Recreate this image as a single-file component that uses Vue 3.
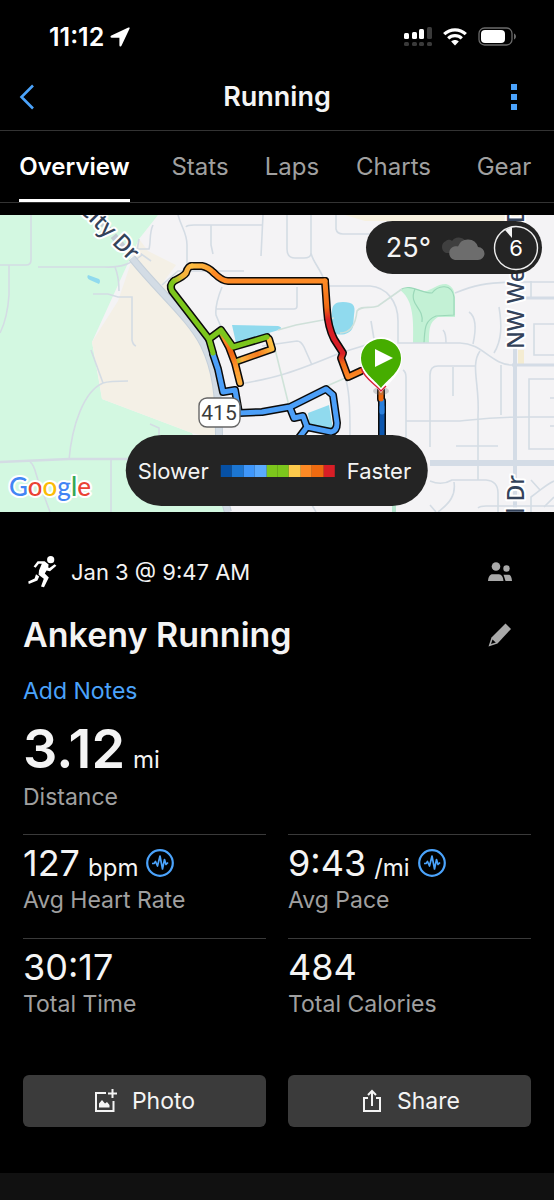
<template>
  <div class="page">
    <div class="status-bar">
      <div class="status-time">
        <span>11:12</span>
        <svg class="location-icon" viewBox="0 0 20 20">
          <path d="M18.4 0.6 C19.4 0.2 20 0.8 19.5 1.8 L11.6 18.6 C11 19.9 9.4 19.6 9.4 18.2 V10.7 H1.8 C0.3 10.7 0 9 1.4 8.4 Z" fill="#fff" />
        </svg>
      </div>
      <div class="status-icons">
        <svg width="28" height="20" viewBox="0 0 28 20">
          <g fill="#fff">
            <rect x="0" y="6" width="5" height="6" rx="1.5" />
            <rect x="8" y="5" width="5" height="7" rx="1.5" />
            <rect x="15" y="2" width="5" height="10" rx="1.5" />
          </g>
          <g fill="#3a3a3a">
            <rect x="23" y="0" width="5" height="12" rx="1.5" />
            <rect v-for="x in [0, 8, 15, 23]" :key="x" :x="x" y="15" width="5" height="4" rx="1.5" />
          </g>
        </svg>
        <svg width="24" height="18" viewBox="0 0 24 18">
          <g fill="none" stroke="#fff" stroke-width="3.2">
            <path d="M1.2 6.2 C7.3 0.3 16.7 0.3 22.8 6.2" />
            <path d="M5.2 10.4 C9 6.8 15 6.8 18.8 10.4" />
          </g>
          <path d="M8.2 13.6 C10.4 11.6 13.6 11.6 15.8 13.6 L12 17.6 Z" fill="#fff" />
        </svg>
        <svg width="39" height="20" viewBox="0 0 39 20">
          <rect x="1" y="1" width="33" height="17" rx="5.5" fill="none" stroke="#6b6b6b" stroke-width="1.3" />
          <rect x="3" y="3" width="24" height="13" rx="4" fill="#fff" />
          <path d="M36 6.5 C38.6 7.6 38.6 11.4 36 12.5 Z" fill="#6b6b6b" />
        </svg>
      </div>
    </div>

    <header class="nav-bar">
      <button class="icon-btn" aria-label="Back">
        <svg width="16" height="26" viewBox="0 0 16 26">
          <path d="M14 1.5 L2.5 13 L14 24.5" fill="none" stroke="#4ba3fb" stroke-width="2.6" />
        </svg>
      </button>
      <h1>Running</h1>
      <button class="icon-btn more" aria-label="More">
        <svg width="6" height="26" viewBox="0 0 6 26" fill="#4ba3fb">
          <rect width="6" height="6" />
          <rect y="10" width="6" height="6" />
          <rect y="20" width="6" height="6" />
        </svg>
      </button>
    </header>

    <nav class="tabs">
      <button
        v-for="tab in tabs"
        :key="tab"
        class="tab"
        :class="{ active: tab === activeTab }"
        @click="activeTab = tab"
      >
        {{ tab }}
      </button>
    </nav>

    <section class="map">
      <svg class="map-canvas" viewBox="0 0 554 297">
        <defs>
          <linearGradient id="slowTurn" gradientUnits="userSpaceOnUse" x1="172" y1="66" x2="190" y2="52">
            <stop offset="0" stop-color="#7cc61c" />
            <stop offset="0.5" stop-color="#f5b53a" />
            <stop offset="1" stop-color="#fbb040" />
          </linearGradient>
          <linearGradient id="topTurn" gradientUnits="userSpaceOnUse" x1="190" y1="52" x2="222" y2="62">
            <stop offset="0" stop-color="#fcbf42" />
            <stop offset="1" stop-color="#fd8a25" />
          </linearGradient>
          <linearGradient id="sprint" gradientUnits="userSpaceOnUse" x1="325" y1="66" x2="345" y2="165">
            <stop offset="0" stop-color="#fd8a25" />
            <stop offset="0.26" stop-color="#f06a14" />
            <stop offset="0.38" stop-color="#d81e26" />
            <stop offset="0.74" stop-color="#d81e26" />
            <stop offset="0.84" stop-color="#f06a14" />
            <stop offset="1" stop-color="#fd8a25" />
          </linearGradient>
          <linearGradient id="spur" gradientUnits="userSpaceOnUse" x1="221" y1="117" x2="240" y2="170">
            <stop offset="0" stop-color="#7cc61c" />
            <stop offset="0.15" stop-color="#fd8a25" />
            <stop offset="0.4" stop-color="#ee6310" />
            <stop offset="0.7" stop-color="#fd9a2c" />
            <stop offset="1" stop-color="#fbb040" />
          </linearGradient>
          <linearGradient id="spurBack" gradientUnits="userSpaceOnUse" x1="234" y1="147" x2="273" y2="133">
            <stop offset="0" stop-color="#7cc61c" />
            <stop offset="0.2" stop-color="#fbb040" />
            <stop offset="0.6" stop-color="#f77b1e" />
            <stop offset="1" stop-color="#fcbf42" />
          </linearGradient>
        </defs>

        <!-- land -->
        <rect width="554" height="297" fill="#f4f3f5" />
        <path d="M158 0 L139 24 L92 127 L102 184 L192 218 L226 297 H0 V0 Z" fill="#d3f8e1" />
        <path d="M139 24 L148 36 L176 50 L164 66 C186 92 207 122 214 160 L217 224 L192 218 L102 184 L99 165 L92 127 L118 86 Z" fill="#f4f0e6" />
        <path d="M345 0 H520 V6 H365 Z" fill="#f6f0df" />
        <path d="M518 135 H524 V150 H518 Z" fill="#f4ecd2" />

        <!-- park -->
        <path d="M400 75 C408 70 414 74 420 75 C430 79 434 69 446 69 C454 71 455 78 455 86 V102 H438 C430 107 429 112 429 128 H413 C414 100 412 84 400 75 Z" fill="#c3f1d5" />
        <g fill="none" stroke="#9bd8b9" stroke-width="1.2">
          <path d="M400 75 C410 68 420 78 432 78 C438 70 452 68 454 82 L454 100 L436 101 C424 106 425 114 424 128" />
          <path d="M415 74 C408 90 424 92 422 107" />
        </g>

        <!-- water -->
        <g fill="#90daee">
          <path d="M88 60 L99 64 Q101 66 99 69 L90 65 Q86 63 88 60 Z" />
          <path d="M232 110 L278 111 C285 113 279 115 272 117 L236 128 Z" />
          <path d="M332 97 C332 90 335 87 343 87 C353 87 356 90 354 100 L353 112 C350 121 337 121 333 117 C330 112 331 104 332 97 Z" />
          <path d="M308 198 L329 190 L333 214 L310 213 Z" />
        </g>

        <!-- streets -->
        <g fill="none" stroke="#d4dce4" stroke-width="1.6">
          <path d="M31 0 V45 Q31 50 26 50 H0" />
          <path d="M9 50 V80 C8 95 4 110 0 118" />
          <path d="M38 52 H104 C122 53 132 48 142 40 M115 52 Q119 62 119 76" />
          <path d="M93 79 H108 L118 82 H132 V125 Q133 130 136 131" />
          <path d="M91 135 L103 168 Q109 166 128 166 M103 168 C84 176 72 210 69 245" />
          <path d="M150 209 L159 213 V228" />
          <path d="M153 10 C149 18 151 27 149 34 L136 34 M139 24 L137 36 L151 46" />
          <path d="M178 0 C182 14 187 18 187 30 V56" />
          <path d="M186 12 Q187 10 194 10 H263 M211 10 V30 L213 39 M263 0 L261 41" />
          <path d="M162 70 L178 56 H244" />
          <path d="M222 72 C218 82 215 92 216 100 L221 112 M216 94 H294 Q297 94 297 91 V72" />
          <path d="M287 0 V34 Q287 43 295 43 H304 Q311 43 311 38 V0 M311 38 C313 48 322 55 325 68" />
          <path d="M326 71 H370 C386 72 398 86 398 106 V128 H460 C482 128 492 150 512 150" />
          <path d="M336 0 V14 Q337 19 343 19 H370" />
          <path d="M240 169 C275 163 292 158 340 138 L366 130" />
          <path d="M262 131 L297 126 Q301 126 304 132 L312 150" />
          <path d="M340 118 C352 118 356 106 357 96 C361 90 370 94 378 91 L402 74" stroke="#cfe0d9" />
          <path d="M278 115 L296 110 L334 103" stroke="#cfe0d9" />
          <path d="M275 134 L290 195 M320 174 L352 160" stroke="#cfe3d9" />
          <path d="M371 106 L374 124" />
          <path d="M455 78 C475 70 485 68 512 67 H554" />
          <path d="M469 97 C478 103 475 120 473 129 M443 115 Q446 118 446 128" />
          <path d="M499 92 C502 110 502 125 494 138 M480 136 C470 150 480 170 478 200 V265" />
          <path d="M430 232 V160 Q430 151 438 151 H476 M453 152 V181" />
          <path d="M403 155 Q406 157 406 162 V228 M406 206 H460 C480 204 490 202 528 202 H554 M501 150 V200" />
          <path d="M456 231 H498" />
          <path d="M554 109 H534 V140 H554 M554 164 H529 V234 H554 M531 66 V84 M554 183 H550 M554 211 H550" />
          <path d="M346 165 C350 180 350 200 350 222" />
          <path d="M430 266 Q442 271 452 265 H486 Q498 266 498 278 V297 M454 267 C456 280 450 288 438 297 M430 290 L436 297" />
          <path d="M554 266 C545 270 540 276 531 282 V297 M531 265 L540 275 M478 293 Q480 291 486 291 H554" />
          <path d="M0 247 L69 244 H130" stroke-width="2.4" />
          <path d="M30 247 C36 250 36 265 42 275 L50 297 M111 245 V297" />
          <path d="M312 290 L316 297 M544 292 L554 282" />
        </g>
        <g fill="none" stroke="#d4dce6">
          <path d="M430 248 H554" stroke-width="6" />
          <path d="M515 130 V297" stroke-width="4" />
          <path d="M525 83 H554 M512 150 H554" stroke-width="3" />
        </g>

        <!-- highway -->
        <path d="M132 43 C158 76 190 102 204 130 C216 155 219 180 219 220 C219 250 221 275 228 297" fill="none" stroke="#c5d0da" stroke-width="8" />
        <path d="M132 43 C158 76 190 102 204 130 C216 155 219 180 219 220 C219 250 221 275 228 297" fill="none" stroke="#d3dce5" stroke-width="6" />
        <path d="M88 -10 L126 36" stroke="#c4ccd4" stroke-width="7" stroke-dasharray="6 4" />
        <path d="M394 290 V297" stroke="#b8e6cf" stroke-width="4" />

        <!-- street names -->
        <g class="street-name">
          <text transform="translate(130 47) rotate(45)" text-anchor="end">City Dr</text>
          <text transform="translate(524 134) rotate(-90)">NW Weigel Dr</text>
          <text transform="translate(524 260) rotate(-90)" text-anchor="end">NW Weigel Dr</text>
        </g>

        <!-- route -->
        <g fill="none" stroke-linejoin="round">
          <g stroke="#0b0b0b" stroke-width="8" stroke-linecap="round">
            <path v-for="leg in route" :key="leg.d" :d="leg.d" />
          </g>
          <g stroke-width="5" stroke-linecap="round">
            <path v-for="leg in route" :key="leg.d" :d="leg.d" :stroke="leg.color" />
          </g>
        </g>

        <!-- route shield -->
        <rect x="199" y="183" width="41" height="29" rx="8" fill="#fff" stroke="#666" stroke-width="1.4" />
        <text class="shield" x="219" y="205" text-anchor="middle">415</text>

        <!-- start pin -->
        <ellipse cx="381" cy="176" rx="8" ry="4" fill="#777" opacity="0.3" />
        <path d="M381 178 C374 168 360 160 360 143 A21 21 0 0 1 402 143 C402 160 388 168 381 178 Z" fill="#fff" />
        <path d="M361 153 C364 163 375 169 381 176 L386 171" fill="none" stroke="#d8203a" stroke-width="1.4" />
        <path d="M381 173 C374 164 361 157 361 143 A20 19 0 0 1 401 143 C401 157 388 164 381 173 Z" fill="#46ad00" />
        <path d="M375 134 L393 143 L375 152 Z" fill="#fff" />

        <text class="google" x="9" y="281">
          <tspan v-for="(l, i) in googleLetters" :key="i" :fill="l.color">{{ l.char }}</tspan>
        </text>
      </svg>

      <div class="weather">
        <span class="temp">25°</span>
        <svg width="46" height="26" viewBox="0 0 46 26">
          <path d="M7 18 A6.5 6.5 0 0 1 7 6 C9 4 12 5 13 6 A8.5 8.5 0 0 1 26 5 L18 18 Z" fill="#3f3f3f" />
          <path d="M16 25 A7 7 0 0 1 15 11.5 C17 11 18 11 19 11.5 A10.5 10.5 0 0 1 39 12 A6.5 6.5 0 0 1 39 25 Z" fill="#6d6d6d" />
        </svg>
        <svg class="wind" width="46" height="46" viewBox="0 0 46 46">
          <circle cx="23" cy="23" r="21.5" fill="none" stroke="#eee" stroke-width="1.4" />
          <path d="M12 5 L19 2 V13 Z" fill="#f4f4f4" />
          <text x="23" y="31" text-anchor="middle" fill="#fff">6</text>
        </svg>
      </div>

      <div class="legend">
        <span>Slower</span>
        <div class="legend-bar">
          <i v-for="(c, i) in paceColors" :key="i" :style="{ background: c }"></i>
        </div>
        <span>Faster</span>
      </div>
    </section>

    <main class="details">
      <div class="row date-row">
        <svg width="30" height="32" viewBox="0 0 30 32">
          <circle cx="22.7" cy="3.7" r="3.6" fill="#fff" />
          <path
            d="M9.6 5.2 H16.6 L20.6 8.6 L20.2 11.4 L21.4 12 L26.6 8.2 L28.4 9.8 L22 15.2 L18.6 14.6 L16.8 17.4 L20.8 21.4 L16 31.2 L13 30.6 L15.8 22.8 L10.6 18.8 L11 14.4 L13.8 7.8 H10.8 L7.6 11.8 L5.6 10.4 Z"
            fill="#fff"
          />
          <path d="M8 18.2 L11.2 20.6 L9.4 24.4 L0.8 28 L0.2 25.6 L6.6 22.4 Z" fill="#fff" />
        </svg>
        <span class="date">Jan 3 @ 9:47 AM</span>
        <button class="icon-btn" aria-label="Privacy">
          <svg width="24" height="20" viewBox="0 0 24 20" fill="#a9a9a9">
            <circle cx="8" cy="4.5" r="4.3" />
            <circle cx="18.5" cy="6.5" r="3.2" />
            <path d="M0 19 C0.3 14.5 2 12.2 4.500 12.2 H11 C13.5 12.2 15 14.5 15.5 19 Z" />
            <path d="M15.5 12.8 H20.5 C22.7 12.8 23.7 15.5 24 19 H17.5 Z" />
          </svg>
        </button>
      </div>

      <div class="row title-row">
        <h2>Ankeny Running</h2>
        <button class="icon-btn" aria-label="Edit">
          <svg width="24" height="24" viewBox="0 0 24 24">
            <path d="M17.5 0.5 L23 6 L9.5 20.5 L0.5 23.5 L3.5 14.5 Z" fill="#a9a9a9" />
            <path d="M4.5 16.4 L7.8 19.500 L3 21 Z" fill="#000" />
          </svg>
        </button>
      </div>

      <a class="notes" href="#">Add Notes</a>

      <div class="distance">
        <div class="value"><strong>3.12</strong><span class="unit">mi</span></div>
        <div class="label">Distance</div>
      </div>

      <div class="stats">
        <div v-for="stat in stats" :key="stat.label" class="stat">
          <div class="value">
            <span>{{ stat.value }}</span>
            <span v-if="stat.unit" class="unit">{{ stat.unit }}</span>
            <svg v-if="stat.unit" class="pulse" width="28" height="28" viewBox="0 0 28 28">
              <g fill="none" stroke="#4ba3fb">
                <circle cx="14" cy="14" r="12.8" stroke-width="2.2" />
                <path d="M6 14.5 H8 L9.5 12.5 L11.5 17 L14 7 L16.5 20 L18.5 10.5 L20 15.5 L22 13.5" stroke-width="1.7" stroke-linejoin="round" />
              </g>
            </svg>
          </div>
          <div class="label">{{ stat.label }}</div>
        </div>
      </div>

      <div class="actions">
        <button class="action">
          <svg width="24" height="24" viewBox="0 0 24 24">
            <path d="M12 4 H2 V22 H19.5 V12" fill="none" stroke="#f4f4f4" stroke-width="2" />
            <path d="M18.5 0 V9 M14 4.5 H23" stroke="#f4f4f4" stroke-width="2" />
            <path d="M5 18.5 V14.5 L8 11 L11 14.5 L13 13 L15.5 16 V18.5 Z" fill="#f4f4f4" />
          </svg>
          <span>Photo</span>
        </button>
        <button class="action">
          <svg width="24" height="24" viewBox="0 0 24 24" fill="none" stroke="#f4f4f4" stroke-width="2">
            <path d="M9 9 H5 V22 H21 V9 H17" />
            <path d="M13 17 V2 M9 6 L13 2 L17 6" />
          </svg>
          <span>Share</span>
        </button>
      </div>
    </main>

    <div class="next-section"></div>
  </div>
</template>

<script setup>
import { ref } from "vue";

const tabs = ["Overview", "Stats", "Laps", "Charts", "Gear"];
const activeTab = ref("Overview");

const stats = [
  { value: "127", unit: "bpm", label: "Avg Heart Rate" },
  { value: "9:43", unit: "/mi", label: "Avg Pace" },
  { value: "30:17", label: "Total Time" },
  { value: "484", label: "Total Calories" },
];

// slow -> fast
const paceColors = [
  "#0650a4",
  "#1c76d2",
  "#3f97fb",
  "#5aaafe",
  "#7cc61c",
  "#7cc61c",
  "#fdca4c",
  "#fd8a25",
  "#ee6a10",
  "#d81e26",
];

const googleLetters = [
  { char: "G", color: "#4285f4" },
  { char: "o", color: "#ea4335" },
  { char: "o", color: "#fbbc05" },
  { char: "g", color: "#4285f4" },
  { char: "l", color: "#34a853" },
  { char: "e", color: "#ea4335" },
];

// route legs, drawn in order
const route = [
  { color: "#0c56ae", d: "M382 192 V230" },
  { color: "#2b80dc", d: "M382 186 V197" },
  { color: "#ee6a10", d: "M381 176 V184" },
  { color: "#4c9ff8", d: "M213 139 L218 154 L223 177 L235 175 L239 198 L262 197 L290 192 L326 174 L333 180 L337 208 Q337 216 331 217 L307 212 L298 224" },
  { color: "#4c9ff8", d: "M290 193 L294 203 L303 201 L307 212" },
  { color: "url(#spurBack)", d: "M235 147 L272 134 L269 124" },
  { color: "url(#spur)", d: "M221 117 L229 132 L235 148 L240 168" },
  { color: "#7cc61c", d: "M213 138 L209 124 L221 115 L233 132 L267 122" },
  { color: "#7cc61c", d: "M209 124 L172 76 Q169 70 174 66" },
  { color: "url(#slowTurn)", d: "M174 66 Q184 61 186 58 Q188 51 192 51" },
  { color: "url(#topTurn)", d: "M192 51 H202 Q208 52 214 58" },
  { color: "#fd8a25", d: "M214 58 Q222 66 228 66 L325 66" },
  { color: "url(#sprint)", d: "M325 66 L327 95 Q328 112 334 124 L343 138 L341 143 L348 162 L361 156" },
];
</script>

<style>
body {
  margin: 0;
  background: #000;
}
</style>

<style scoped>
.page {
  display: flex;
  flex-direction: column;
  min-height: 100vh;
  background: #000;
  color: #f4f4f4;
  font-family: Inter, "Liberation Sans", sans-serif;
  font-size: 23px;
  line-height: 32px;
}

button {
  padding: 0;
  border: none;
  background: none;
  color: inherit;
  font: inherit;
  cursor: pointer;
}

svg {
  display: block;
  flex: none;
}

/* status bar */
.status-bar {
  display: flex;
  justify-content: space-between;
  align-items: center;
  height: 64px;
  padding: 10px 37px 0 49px;
  box-sizing: border-box;
}

.status-time {
  display: flex;
  align-items: center;
  gap: 6px;
  color: #fff;
  font-size: 25px;
  font-weight: 600;
}

.location-icon {
  width: 20px;
  height: 20px;
}

.status-icons {
  display: flex;
  align-items: center;
  gap: 11px;
}

/* nav bar */
.nav-bar {
  display: grid;
  grid-template-columns: 1fr auto 1fr;
  align-items: center;
  height: 66px;
  padding: 0 19px;
  border-bottom: 1px solid #333;
}

.nav-bar h1 {
  margin: 0;
  font-size: 27px;
  font-weight: 600;
}

.icon-btn {
  display: flex;
}

.more {
  justify-self: end;
  margin-right: 18px;
}

/* tabs */
.tabs {
  display: grid;
  grid-template-columns: 149fr 102fr 82fr 121fr 100fr;
  justify-items: center;
  height: 71px;
  border-bottom: 1px solid #333;
}

.tab {
  border-top: 3px solid transparent;
  border-bottom: 3px solid transparent;
  color: #a0a0a0;
  font-size: 24px;
}

.tab.active {
  border-bottom-color: #fff;
  color: #fff;
  font-weight: 600;
}

/* map */
.map {
  position: relative;
  margin-top: 12px;
}

.map-canvas {
  width: 100%;
  height: auto;
  overflow: hidden;
}

.street-name {
  font-family: "Noto Sans", sans-serif;
  font-size: 23px;
  font-weight: 500;
  fill: #33425a;
  stroke: #fff;
  stroke-width: 4px;
  stroke-linejoin: round;
  paint-order: stroke;
}

.shield {
  font-family: Roboto, sans-serif;
  font-size: 21px;
  fill: #3c3c3c;
}

.google {
  font-family: Lato, sans-serif;
  font-size: 26px;
  font-weight: 500;
  stroke: #fff;
  stroke-width: 4px;
  stroke-linejoin: round;
  paint-order: stroke;
}

.weather {
  position: absolute;
  top: 6px;
  right: 12px;
  display: flex;
  align-items: center;
  gap: 8px;
  height: 53px;
  padding: 0 3px 0 20px;
  border-radius: 27px;
  background: #242424;
}

.temp {
  font-size: 27px;
}

.wind {
  font-size: 22px;
}

.legend {
  position: absolute;
  bottom: 6px;
  left: 50%;
  display: flex;
  align-items: center;
  gap: 12px;
  height: 71px;
  padding: 0 17px 0 12px;
  border-radius: 36px;
  background: #242424;
  font-size: 22px;
  transform: translateX(-50%);
}

.legend-bar {
  display: flex;
  width: 114px;
  height: 12px;
}

.legend-bar i {
  flex: 1;
}

/* details */
.details {
  padding: 40px 23px 46px;
}

.row {
  display: flex;
  align-items: center;
}

.row .icon-btn {
  margin-left: auto;
  margin-right: 19px;
}

.date-row {
  height: 40px;
  padding-left: 5px;
  gap: 13px;
  font-size: 22px;
}

.title-row {
  height: 46px;
  margin: 20px 0 17px;
}

.title-row h2 {
  margin: 0;
  font-size: 34px;
  font-weight: 600;
}

.notes {
  display: block;
  color: #4ba3fb;
  text-decoration: none;
}

.value {
  display: flex;
  align-items: baseline;
  gap: 8px;
  font-size: 36px;
  line-height: 42px;
}

.value strong {
  font-size: 54px;
  font-weight: 600;
  line-height: 64px;
}

.unit {
  font-size: 24px;
}

.label {
  color: #a0a0a0;
}

.distance {
  margin: 10px 0 21px;
}

.stats,
.actions {
  display: grid;
  grid-template-columns: 1fr 1fr;
  column-gap: 22px;
}

.stat {
  height: 103px;
  border-top: 1px solid #3a3a3a;
}

.stat .value {
  height: 42px;
  margin-top: 7px;
}

.pulse {
  align-self: center;
}

.actions {
  margin-top: 33px;
}

.action {
  display: flex;
  justify-content: center;
  align-items: center;
  gap: 14px;
  height: 52px;
  border-radius: 6px;
  background: #3b3b3b;
}

.next-section {
  flex: 1;
  min-height: 27px;
  background: #111;
}
</style>
